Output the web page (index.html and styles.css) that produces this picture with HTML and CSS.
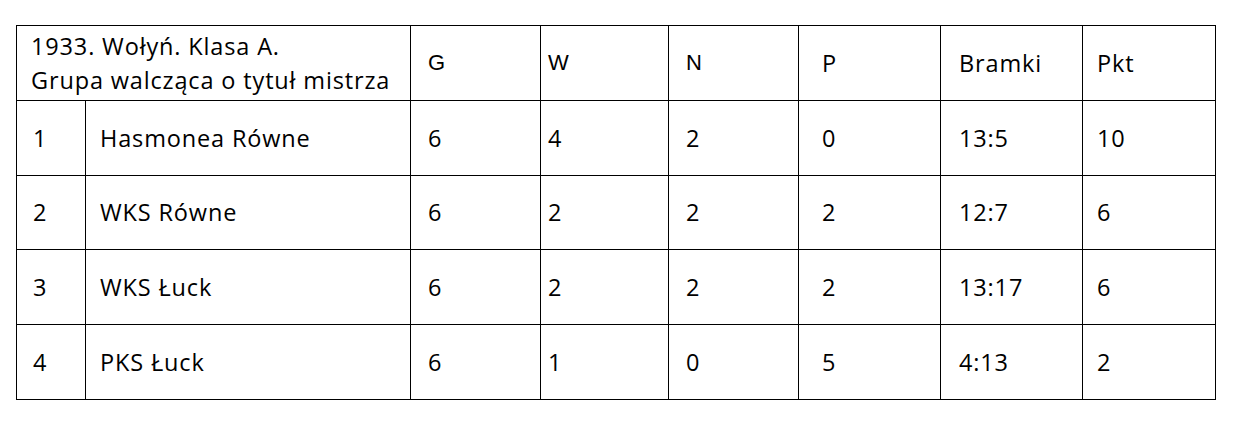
FILE: index.html
```html
<!DOCTYPE html>
<html lang="pl">
<head>
<meta charset="utf-8">
<link rel="stylesheet" href="styles.css">
</head>
<body>
<table class="tbl">
  <colgroup>
    <col class="c-pos"><col class="c-team"><col class="c-g"><col class="c-w"><col class="c-n"><col class="c-p"><col class="c-b"><col class="c-pkt">
  </colgroup>
  <tr class="head">
    <td colspan="2" class="title">1933. Wołyń. Klasa A.<br>Grupa walcząca o tytuł mistrza</td>
    <td class="g arial">G</td>
    <td class="w arial">W</td>
    <td class="n arial">N</td>
    <td class="p">P</td>
    <td class="b">Bramki</td>
    <td class="pkt">Pkt</td>
  </tr>
  <tr>
    <td class="pos">1</td><td class="team">Hasmonea Równe</td><td class="g">6</td><td class="w">4</td><td class="n">2</td><td class="p">0</td><td class="b">13:5</td><td class="pkt">10</td>
  </tr>
  <tr>
    <td class="pos">2</td><td class="team">WKS Równe</td><td class="g">6</td><td class="w">2</td><td class="n">2</td><td class="p">2</td><td class="b">12:7</td><td class="pkt">6</td>
  </tr>
  <tr>
    <td class="pos">3</td><td class="team">WKS Łuck</td><td class="g">6</td><td class="w">2</td><td class="n">2</td><td class="p">2</td><td class="b">13:17</td><td class="pkt">6</td>
  </tr>
  <tr>
    <td class="pos">4</td><td class="team">PKS Łuck</td><td class="g">6</td><td class="w">1</td><td class="n">0</td><td class="p">5</td><td class="b">4:13</td><td class="pkt">2</td>
  </tr>
</table>
</body>
</html>
```
FILE: styles.css
```css
html, body {
  margin: 0;
  background: #ffffff;
}
body {
  padding: 25px 0 0 16px;
  font-family: "Open Sans", "Lato", sans-serif;
  font-size: 23.5px;
  letter-spacing: 0.85px;
  color: #000000;
}
.tbl {
  border-collapse: collapse;
  table-layout: fixed;
  width: 1199px;
}
.c-pos { width: 69px; }
.c-team { width: 325px; }
.c-g { width: 130px; }
.c-w { width: 128px; }
.c-n { width: 130px; }
.c-p { width: 142px; }
.c-b { width: 142px; }
.c-pkt { width: 133px; }
.tbl td {
  border: 1px solid #000000;
  height: 73.8px;
  padding: 0;
  vertical-align: middle;
  white-space: nowrap;
  line-height: 34px;
}
.title { padding-left: 14px !important; }
.pos { padding-left: 16px !important; }
.team { padding-left: 14px !important; }
.g { padding-left: 17px !important; }
.w { padding-left: 7px !important; }
.n { padding-left: 17px !important; }
.p { padding-left: 23px !important; }
.b { padding-left: 18px !important; }
.pkt { padding-left: 14px !important; }
.arial { font-family: "Liberation Sans", Arial, sans-serif; font-size: 22px; letter-spacing: 0; }
```
